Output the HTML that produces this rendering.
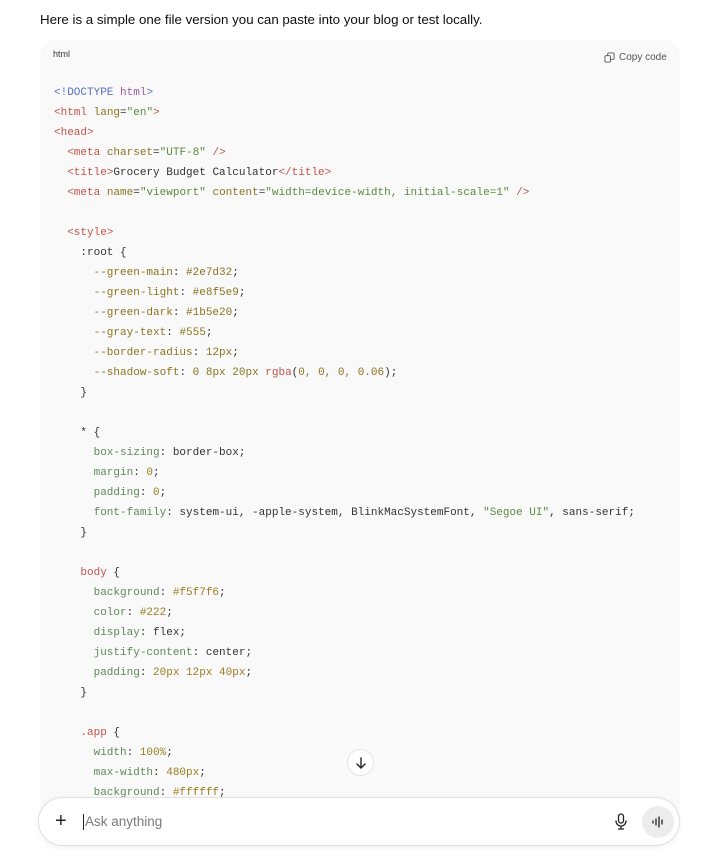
<!DOCTYPE html>
<html><head><meta charset="utf-8">
<style>
body{margin:0;width:725px;height:851px;background:#fff;font-family:"Liberation Sans",sans-serif;overflow:hidden;position:relative}
.intro{position:absolute;left:40px;top:12px;font-size:13.3px;color:#0d0d0d}
.card{position:absolute;left:40px;top:40px;width:640px;height:780px;background:#f9f9f9;border-radius:16px}
.lang{position:absolute;left:13px;top:9px;font-size:9px;color:#333}
.copy{position:absolute;left:564px;top:12px;font-size:10px;color:#555;display:flex;align-items:center;gap:4px}
pre{position:absolute;left:14px;top:43px;margin:0;font-family:"Liberation Mono",monospace;font-size:11px;line-height:20px;color:#333}
.t{color:#c0544b}.a{color:#8a7420}.s{color:#5c8a3e}.p{color:#5f8a57}.n{color:#9a7d1e}.k{color:#5a6fbf}.m{color:#a05aa0}
.down{position:absolute;left:347px;top:749px;width:27px;height:27px;border:1px solid #e3e3e3;border-radius:50%;background:#fff;box-sizing:border-box;display:flex;align-items:center;justify-content:center}
.input{position:absolute;left:38px;top:797px;width:642px;height:49px;border:1px solid #e0e0e0;border-radius:25px;background:#fff;box-sizing:border-box;box-shadow:0 2px 6px rgba(0,0,0,.05)}
.ph{position:absolute;left:44px;top:16px;font-size:13.5px;color:#7a7a7a;border-left:1px solid #222;padding-left:1px;line-height:16px}
.plus{position:absolute;left:16px;top:12px;font-size:20px;color:#222;line-height:22px}
.mic{position:absolute;left:576px;top:15px}
.voice{position:absolute;left:603px;top:8px;width:32px;height:32px;border-radius:50%;background:#ececec;display:flex;align-items:center;justify-content:center}
</style></head><body>
<div class="intro">Here is a simple one file version you can paste into your blog or test locally.</div>
<div class="card">
<div class="lang">html</div>
<div class="copy"><svg width="11" height="11" viewBox="0 0 12 12" fill="none" stroke="#555" stroke-width="1"><rect x="1" y="4" width="6" height="7" rx="1"/><path d="M4 4V2a1 1 0 0 1 1-1h5a1 1 0 0 1 1 1v5a1 1 0 0 1-1 1H7"/></svg>Copy code</div>
<pre><span class="k">&lt;!DOCTYPE</span> <span class="m">html</span><span class="k">&gt;</span>
<span class="t">&lt;html</span> <span class="a">lang</span>=<span class="s">"en"</span><span class="t">&gt;</span>
<span class="t">&lt;head&gt;</span>
  <span class="t">&lt;meta</span> <span class="a">charset</span>=<span class="s">"UTF-8"</span> <span class="t">/&gt;</span>
  <span class="t">&lt;title&gt;</span>Grocery Budget Calculator<span class="t">&lt;/title&gt;</span>
  <span class="t">&lt;meta</span> <span class="a">name</span>=<span class="s">"viewport"</span> <span class="a">content</span>=<span class="s">"width=device-width, initial-scale=1"</span> <span class="t">/&gt;</span>

  <span class="t">&lt;style&gt;</span>
    :root {
      <span class="a">--green-main</span>: <span class="a">#2e7d32</span>;
      <span class="a">--green-light</span>: <span class="a">#e8f5e9</span>;
      <span class="a">--green-dark</span>: <span class="a">#1b5e20</span>;
      <span class="a">--gray-text</span>: <span class="a">#555</span>;
      <span class="a">--border-radius</span>: <span class="a">12px</span>;
      <span class="a">--shadow-soft</span>: <span class="a">0 8px 20px</span> <span class="t">rgba</span>(<span class="a">0, 0, 0, 0.06</span>);
    }

    * {
      <span class="p">box-sizing</span>: border-box;
      <span class="p">margin</span>: <span class="n">0</span>;
      <span class="p">padding</span>: <span class="n">0</span>;
      <span class="p">font-family</span>: system-ui, -apple-system, BlinkMacSystemFont, <span class="s">"Segoe UI"</span>, sans-serif;
    }

    <span class="t">body</span> {
      <span class="p">background</span>: <span class="n">#f5f7f6</span>;
      <span class="p">color</span>: <span class="n">#222</span>;
      <span class="p">display</span>: flex;
      <span class="p">justify-content</span>: center;
      <span class="p">padding</span>: <span class="n">20px 12px 40px</span>;
    }

    <span class="t">.app</span> {
      <span class="p">width</span>: <span class="n">100%</span>;
      <span class="p">max-width</span>: <span class="n">480px</span>;
      <span class="p">background</span>: <span class="n">#ffffff</span>;</pre>
</div>
<div class="down"><svg width="14" height="14" viewBox="0 0 14 14" fill="none" stroke="#222" stroke-width="1.4" stroke-linecap="round"><path d="M7 2v10M3 8l4 4 4-4"/></svg></div>
<div class="input">
<div class="plus">+</div>
<div class="ph">Ask anything</div>
<svg class="mic" width="12" height="17" viewBox="0 0 12 17" fill="none" stroke="#222" stroke-width="1.3" stroke-linecap="round"><rect x="3.5" y="1" width="5" height="9" rx="2.5"/><path d="M1 8a5 5 0 0 0 10 0M6 13v3M3.5 16h5"/></svg>
<div class="voice"><svg width="14" height="12" viewBox="0 0 14 12" stroke="#222" stroke-width="1.3" stroke-linecap="round"><path d="M2 5v2M5 3v6M8 1v10M11 4v4"/></svg></div>
</div>
</body></html>
